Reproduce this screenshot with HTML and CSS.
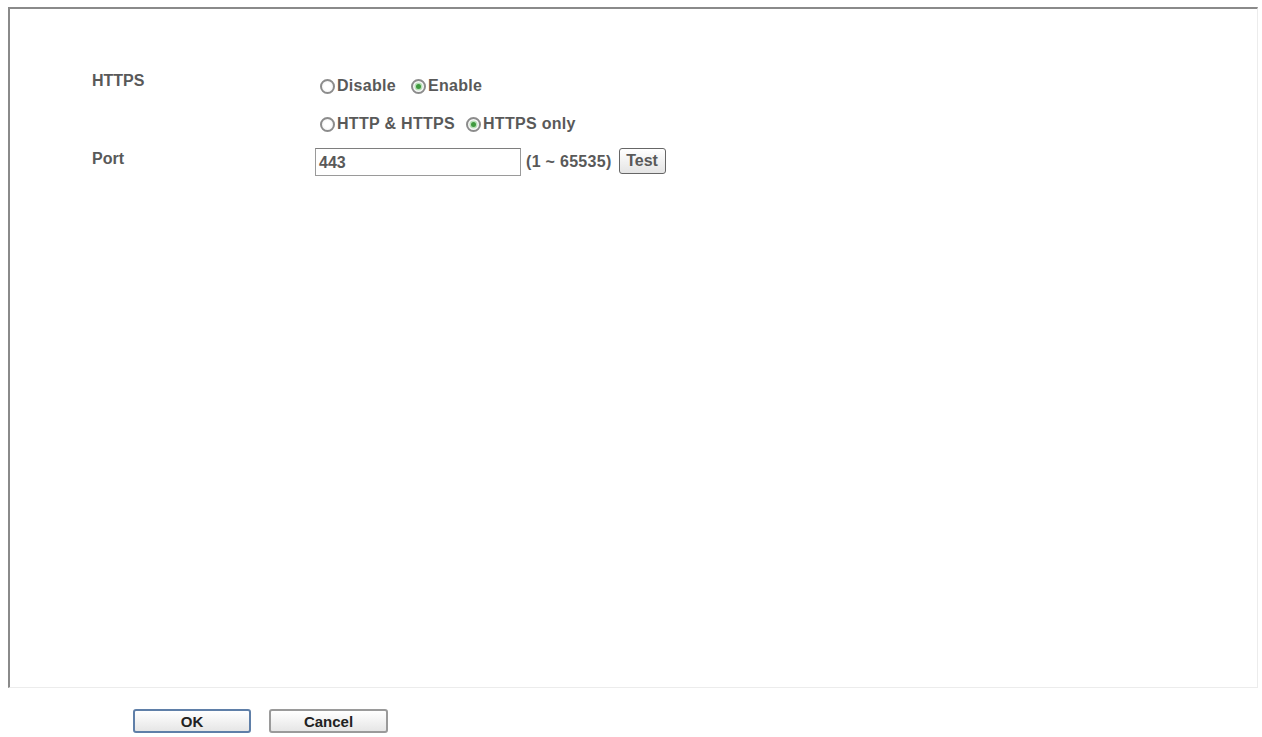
FILE: index.html
```html
<!DOCTYPE html>
<html>
<head>
<meta charset="utf-8">
<link rel="stylesheet" href="styles.css">
</head>
<body>
<div class="panel">
  <div class="row row-https">
    <div class="label">HTTPS</div>
    <div class="value radios">
      <div class="line">
        <span class="opt"><span class="radio"></span>Disable</span>
        <span class="opt opt-2"><span class="radio on"></span>Enable</span>
      </div>
      <div class="line">
        <span class="opt"><span class="radio"></span>HTTP &amp; HTTPS</span>
        <span class="opt opt-2b"><span class="radio on"></span>HTTPS only</span>
      </div>
    </div>
  </div>
  <div class="row row-port">
    <div class="label label-port">Port</div>
    <div class="value port">
      <div class="input">443</div>
      <span class="range">(1 ~ 65535)</span>
      <span class="btn-test">Test</span>
    </div>
  </div>
</div>
<div class="actions">
  <span class="btn btn-ok">OK</span>
  <span class="btn btn-cancel">Cancel</span>
</div>
</body>
</html>
```
FILE: styles.css
```css
html, body {
  margin: 0;
  background: #ffffff;
}
body {
  padding: 7px 4px 0 8px;
  font-family: "Liberation Sans", Arial, sans-serif;
  font-weight: bold;
  font-size: 16px;
  color: #595959;
}
.panel {
  height: 681px;
  box-sizing: border-box;
  border-top: 2px solid #8a8a8a;
  border-left: 2px solid #8a8a8a;
  border-right: 1px solid #ececec;
  border-bottom: 1px solid #ececec;
  padding: 62px 0 0 82px;
}
.row {
  display: grid;
  grid-template-columns: 223px 1fr;
}
.label {
  line-height: 20px;
  height: 20px;
}
.radios {
  padding-top: 5px;
  display: flex;
  flex-direction: column;
  gap: 18px;
}
.line {
  display: flex;
  align-items: center;
  height: 20px;
  line-height: 20px;
}
.opt {
  display: inline-flex;
  align-items: center;
  letter-spacing: 0.3px;
}
.opt-2 { margin-left: 15px; }
.opt-2b { margin-left: 11px; }
.radio {
  width: 11px;
  height: 11px;
  border: 2px solid #8c8c8c;
  border-radius: 50%;
  margin: 0 2px 0 5px;
  background: radial-gradient(circle, #ffffff 40%, #ececec 100%);
  position: relative;
  flex: none;
}
.radio.on::after {
  content: "";
  position: absolute;
  left: 3px;
  top: 3px;
  width: 5px;
  height: 5px;
  border-radius: 50%;
  background: #3e9a3e;
  box-shadow: 0 0 0 1.5px #b9e0b9;
}
.opt-2 .radio, .opt-2b .radio { margin-left: 0; }
.row-port {
  margin-top: 14px;
}
.label-port {
  padding-top: 1px;
}
.port {
  display: flex;
  align-items: center;
}
.input {
  width: 206px;
  height: 28px;
  box-sizing: border-box;
  border: 1px solid #9a9a9a;
  border-top-color: #7e7e7e;
  padding: 4px 0 0 3px;
  line-height: 20px;
}
.range {
  margin-left: 5px;
  letter-spacing: 0.3px;
}
.btn-test {
  margin-left: 7px;
  width: 47px;
  height: 26px;
  box-sizing: border-box;
  border: 1px solid #666;
  border-radius: 3px;
  background: linear-gradient(#ffffff, #e4e4e4);
  display: flex;
  align-items: center;
  justify-content: center;
  margin-top: -2px;
}
.actions {
  display: flex;
  gap: 18px;
  padding: 21px 0 0 125px;
}
.btn {
  width: 118px;
  height: 24px;
  box-sizing: border-box;
  border: 2px solid #9a9a9a;
  border-radius: 3px;
  background: linear-gradient(#ffffff, #e6e6e6);
  display: flex;
  align-items: center;
  justify-content: center;
  color: #222;
  font-size: 15px;
}
.btn-ok {
  border-color: #5f7fa8;
}
.btn-cancel {
  width: 119px;
}
```
